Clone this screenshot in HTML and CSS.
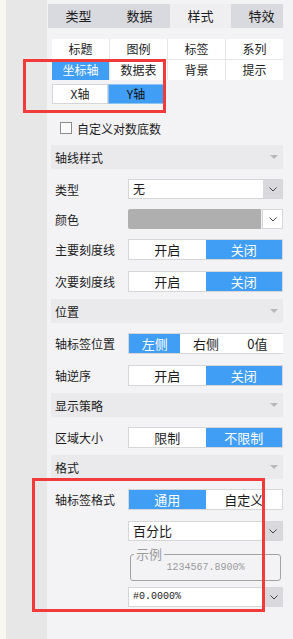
FILE: index.html
```html
<!DOCTYPE html>
<html lang="zh">
<head>
    <meta charset="UTF-8">
    <title>样式 - 坐标轴</title>
    <link rel="stylesheet" href="styles.css">
</head>
<body>
    <div class="screen">
        <div class="edge"></div>
        <div class="rail"></div>
        <div class="panel">
            <div class="tabs">
                <div class="tab">类型</div>
                <div class="tab">数据</div>
                <div class="tab active">样式</div>
                <div class="tab">特效</div>
            </div>

            <div class="subtabs">
                <div class="sub">标题</div>
                <div class="sub">图例</div>
                <div class="sub">标签</div>
                <div class="sub">系列</div>
                <div class="sub on">坐标轴</div>
                <div class="sub">数据表</div>
                <div class="sub">背景</div>
                <div class="sub">提示</div>
            </div>

            <div class="axis-switch">
                <div class="axis-btn">X轴</div>
                <div class="axis-btn on">Y轴</div>
            </div>

            <label class="check-row"><span class="box"></span>自定义对数底数</label>

            <div class="section">轴线样式<i class="caret"></i></div>
            <div class="row">
                <span class="label">类型</span>
                <div class="select">
                    <span class="value">无</span>
                    <span class="drop"><svg width="8" height="5" viewBox="0 0 8 5"><polyline points="0.5,0.5 4,4 7.5,0.5" fill="none" stroke="#444" stroke-width="1"/></svg></span>
                </div>
            </div>
            <div class="row">
                <span class="label">颜色</span>
                <div class="select color">
                    <span class="swatch"></span>
                    <span class="drop"><svg width="8" height="5" viewBox="0 0 8 5"><polyline points="0.5,0.5 4,4 7.5,0.5" fill="none" stroke="#444" stroke-width="1"/></svg></span>
                </div>
            </div>
            <div class="row gap">
                <span class="label">主要刻度线</span>
                <div class="toggle"><span>开启</span><span class="on">关闭</span></div>
            </div>
            <div class="row gap-l">
                <span class="label">次要刻度线</span>
                <div class="toggle"><span>开启</span><span class="on">关闭</span></div>
            </div>

            <div class="section">位置<i class="caret"></i></div>
            <div class="row gap">
                <span class="label">轴标签位置</span>
                <div class="toggle three"><span class="on">左侧</span><span>右侧</span><span>0值</span></div>
            </div>
            <div class="row gap-l">
                <span class="label">轴逆序</span>
                <div class="toggle"><span>开启</span><span class="on">关闭</span></div>
            </div>

            <div class="section">显示策略<i class="caret"></i></div>
            <div class="row gap">
                <span class="label">区域大小</span>
                <div class="toggle"><span>限制</span><span class="on">不限制</span></div>
            </div>

            <div class="section">格式<i class="caret"></i></div>
            <div class="row gap">
                <span class="label">轴标签格式</span>
                <div class="toggle"><span class="on">通用</span><span>自定义</span></div>
            </div>
            <div class="row gap-l">
                <span class="label"></span>
                <div class="select">
                    <span class="value big">百分比</span>
                    <span class="drop"><svg width="8" height="5" viewBox="0 0 8 5"><polyline points="0.5,0.5 4,4 7.5,0.5" fill="none" stroke="#444" stroke-width="1"/></svg></span>
                </div>
            </div>
            <div class="row sample-row">
                <span class="label"></span>
                <fieldset class="sample">
                    <legend>示例</legend>
                    <div class="sample-value">1234567.8900%</div>
                </fieldset>
            </div>
            <div class="row pattern-row">
                <span class="label"></span>
                <div class="select split">
                    <span class="value mono">#0.0000%</span>
                    <span class="drop"><svg width="8" height="5" viewBox="0 0 8 5"><polyline points="0.5,0.5 4,4 7.5,0.5" fill="none" stroke="#444" stroke-width="1"/></svg></span>
                </div>
            </div>
        </div>

        <!-- annotation boxes -->
        <div class="mark mark-axis"></div>
        <div class="mark mark-format"></div>
    </div>
</body>
</html>
```

FILE: styles.css
```css
* {
    margin: 0;
    padding: 0;
    box-sizing: border-box;
}

body {
    font-family: "Noto Sans CJK SC", "Liberation Sans", sans-serif;
    font-size: 12px;
    color: #1c1c1c;
    background-color: #f3f3f6;
}

.screen {
    position: relative;
    display: flex;
    width: 293px;
    height: 639px;
    overflow: hidden;
}

.edge {
    width: 6px;
    background-color: #f8f6f0;
}

.rail {
    width: 41px;
    background-color: #e7e7e7;
}

.panel {
    flex: 1;
    padding: 4px 10px 0 0;
    background-color: #f3f3f6;
}

/* top tabs */
.tabs {
    display: flex;
    width: 235px;
    height: 24px;
    margin-left: 1px;
    overflow: hidden;
}

.tab {
    flex: 0 0 61px;
    line-height: 24px;
    text-align: center;
    font-size: 13px;
    background-color: #d9dadf;
}

.tab.active {
    background-color: #efeff2;
}

/* sub tabs */
.subtabs {
    display: grid;
    grid-template-columns: repeat(4, 57px);
    grid-auto-rows: 20px;
    gap: 1px;
    margin: 11px 0 0 5px;
    width: 231px;
    background-color: #e6e6e9;
}

.sub {
    background-color: #fff;
    line-height: 20px;
    text-align: center;
}

.sub.on {
    background-color: #419ef5;
    color: #fff;
}

.axis-switch {
    display: flex;
    margin: 4px 0 0 5px;
}

.axis-btn {
    width: 56px;
    height: 20px;
    line-height: 18px;
    text-align: center;
    background-color: #fff;
    border: 1px solid #d6d6d8;
}

.axis-btn.on {
    background-color: #419ef5;
    border-color: #8fc2f2;
    color: #111;
}

.check-row {
    display: flex;
    align-items: center;
    height: 20px;
    margin-top: 14px;
    padding-left: 13px;
}

.box {
    width: 12px;
    height: 12px;
    margin-right: 5px;
    border: 1px solid #8c8c8c;
    background-color: #fafafa;
}

/* section headers */
.section {
    display: flex;
    align-items: center;
    justify-content: space-between;
    height: 24px;
    margin: 7px 0 0 4px;
    padding: 0 5px 0 4px;
    background-color: #eaeaed;
}

.caret {
    width: 0;
    height: 0;
    border-left: 4px solid transparent;
    border-right: 4px solid transparent;
    border-top: 4px solid #b8b8bc;
}

/* form rows */
.row {
    display: flex;
    align-items: center;
    margin: 10px 0 0 8px;
}

.row.gap-l {
    margin-top: 11px;
}

.label {
    width: 73px;
    flex-shrink: 0;
}

.select {
    display: flex;
    width: 155px;
    height: 20px;
    border: 1px solid #d6d6d8;
    background-color: #fff;
}

.select .value {
    flex: 1;
    padding-left: 4px;
    line-height: 18px;
}

.select .value.big {
    font-size: 13px;
}

.drop {
    display: flex;
    align-items: center;
    justify-content: center;
    width: 19px;
    background-color: #d9d9dd;
}

.select.color {
    border: none;
    background: transparent;
}

.swatch {
    flex: 1;
    background-color: #afafaf;
    border-radius: 2px 0 0 2px;
}

.select.color .drop {
    width: 21px;
    margin-left: 1px;
    background-color: #fff;
    border: 1px solid #d6d6d8;
}

.toggle {
    display: flex;
    width: 155px;
    height: 21px;
    border: 1px solid #d6d6d8;
    background-color: #fff;
}

.toggle span {
    flex: 1;
    line-height: 19px;
    text-align: center;
    font-size: 13px;
}

.toggle span.on {
    background-color: #419ef5;
    color: #fff;
}

.toggle.three {
    border-right: none;
}

/* format sample */
.sample-row {
    margin-top: 7px;
}

.sample {
    width: 151px;
    margin-left: 2px;
    padding: 1px 0 5px;
    border: 1px solid #a3a3a3;
    border-radius: 3px;
}

.sample legend {
    margin-left: 3px;
    padding: 0 2px;
    line-height: 12px;
    font-size: 13px;
    color: #9a9a9a;
}

.sample-value {
    line-height: 14px;
    text-align: center;
    font-family: "Liberation Mono", monospace;
    font-size: 10px;
    color: #9a9a9a;
}

.pattern-row {
    margin-top: 6px;
}

.select.split {
    border: none;
    background: transparent;
}

.select.split .value {
    background-color: #fff;
    border: 1px solid #d6d6d8;
    margin-right: 1px;
}

.mono {
    font-family: "Liberation Mono", monospace;
    font-size: 10px;
}

/* red annotation frames */
.mark {
    position: absolute;
    border: 3px solid #f23a3a;
}

.mark-axis {
    left: 23px;
    top: 59px;
    width: 143px;
    height: 54px;
}

.mark-format {
    left: 32px;
    top: 478px;
    width: 233px;
    height: 134px;
}
```
